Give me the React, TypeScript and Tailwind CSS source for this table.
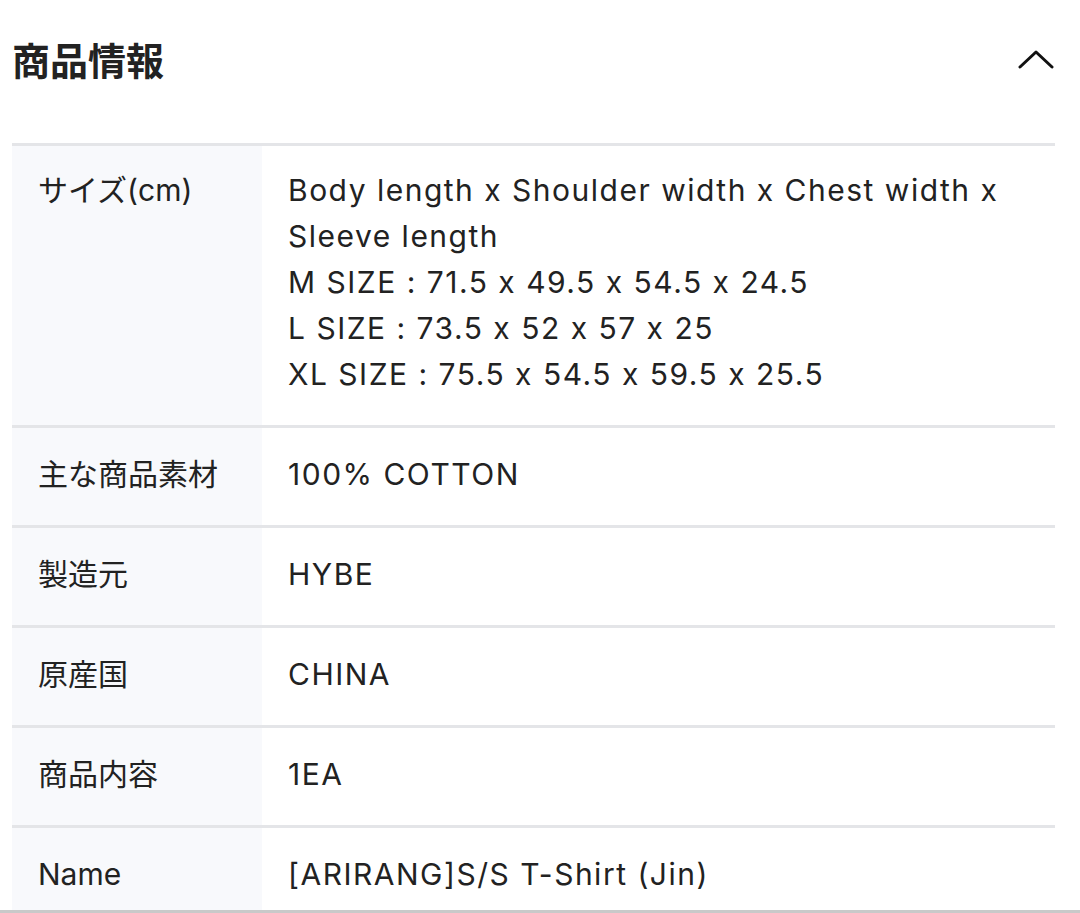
import React from "react";

const rows: { label: string; value: string[] }[] = [
  {
    label: "サイズ(cm)",
    value: [
      "Body length x Shoulder width x Chest width x Sleeve length",
      "M SIZE : 71.5 x 49.5 x 54.5 x 24.5",
      "L SIZE : 73.5 x 52 x 57 x 25",
      "XL SIZE : 75.5 x 54.5 x 59.5 x 25.5",
    ],
  },
  { label: "主な商品素材", value: ["100% COTTON"] },
  { label: "製造元", value: ["HYBE"] },
  { label: "原産国", value: ["CHINA"] },
  { label: "商品内容", value: ["1EA"] },
  { label: "Name", value: ["[ARIRANG]S/S T-Shirt (Jin)"] },
];

export default function App() {
  return (
    <div
      className="w-[1080px] h-[913px] overflow-hidden bg-white text-[#222222] border-b-[3px] border-[#c9c9c9]"
      style={{ fontFamily: '"Inter", "Noto Sans CJK JP", sans-serif', fontFeatureSettings: '"calt" 0' }}
    >
      <div className="flex items-center justify-between pl-[12px] pr-[26px] h-[118px]">
        <h2 className="text-[38px] font-bold leading-none" style={{ fontFamily: '"Noto Sans CJK JP", sans-serif' }}>
          商品情報
        </h2>
        <svg width="36" height="20" viewBox="0 0 36 20" fill="none" stroke="#111" strokeWidth="3" strokeLinecap="round" strokeLinejoin="round">
          <path d="M2 18 L18 3 L34 18" />
        </svg>
      </div>
      <div className="mx-[12px] w-[1043px] border-t-[3px] border-[#e4e5e8] mt-[25px]">
        {rows.map((r, i) => (
          <div key={i} className="flex border-b-[3px] border-[#e4e5e8]">
            <div
              className={`w-[250px] shrink-0 bg-[#f8f9fc] pl-[26px] text-[30px] leading-[46px] ${i === 0 ? "pt-[21px] pb-[28px]" : "pt-[23px] pb-[28px]"}`}
            >
              {r.label}
            </div>
            <div
              className={`flex-1 pl-[26px] pr-[20px] text-[30px] leading-[46px] tracking-[1.5px] ${i === 0 ? "pt-[21px] pb-[28px]" : "pt-[23px] pb-[28px]"}`}
            >
              {r.value.map((v, j) => (
                <div key={j}>{v}</div>
              ))}
            </div>
          </div>
        ))}
      </div>
    </div>
  );
}
